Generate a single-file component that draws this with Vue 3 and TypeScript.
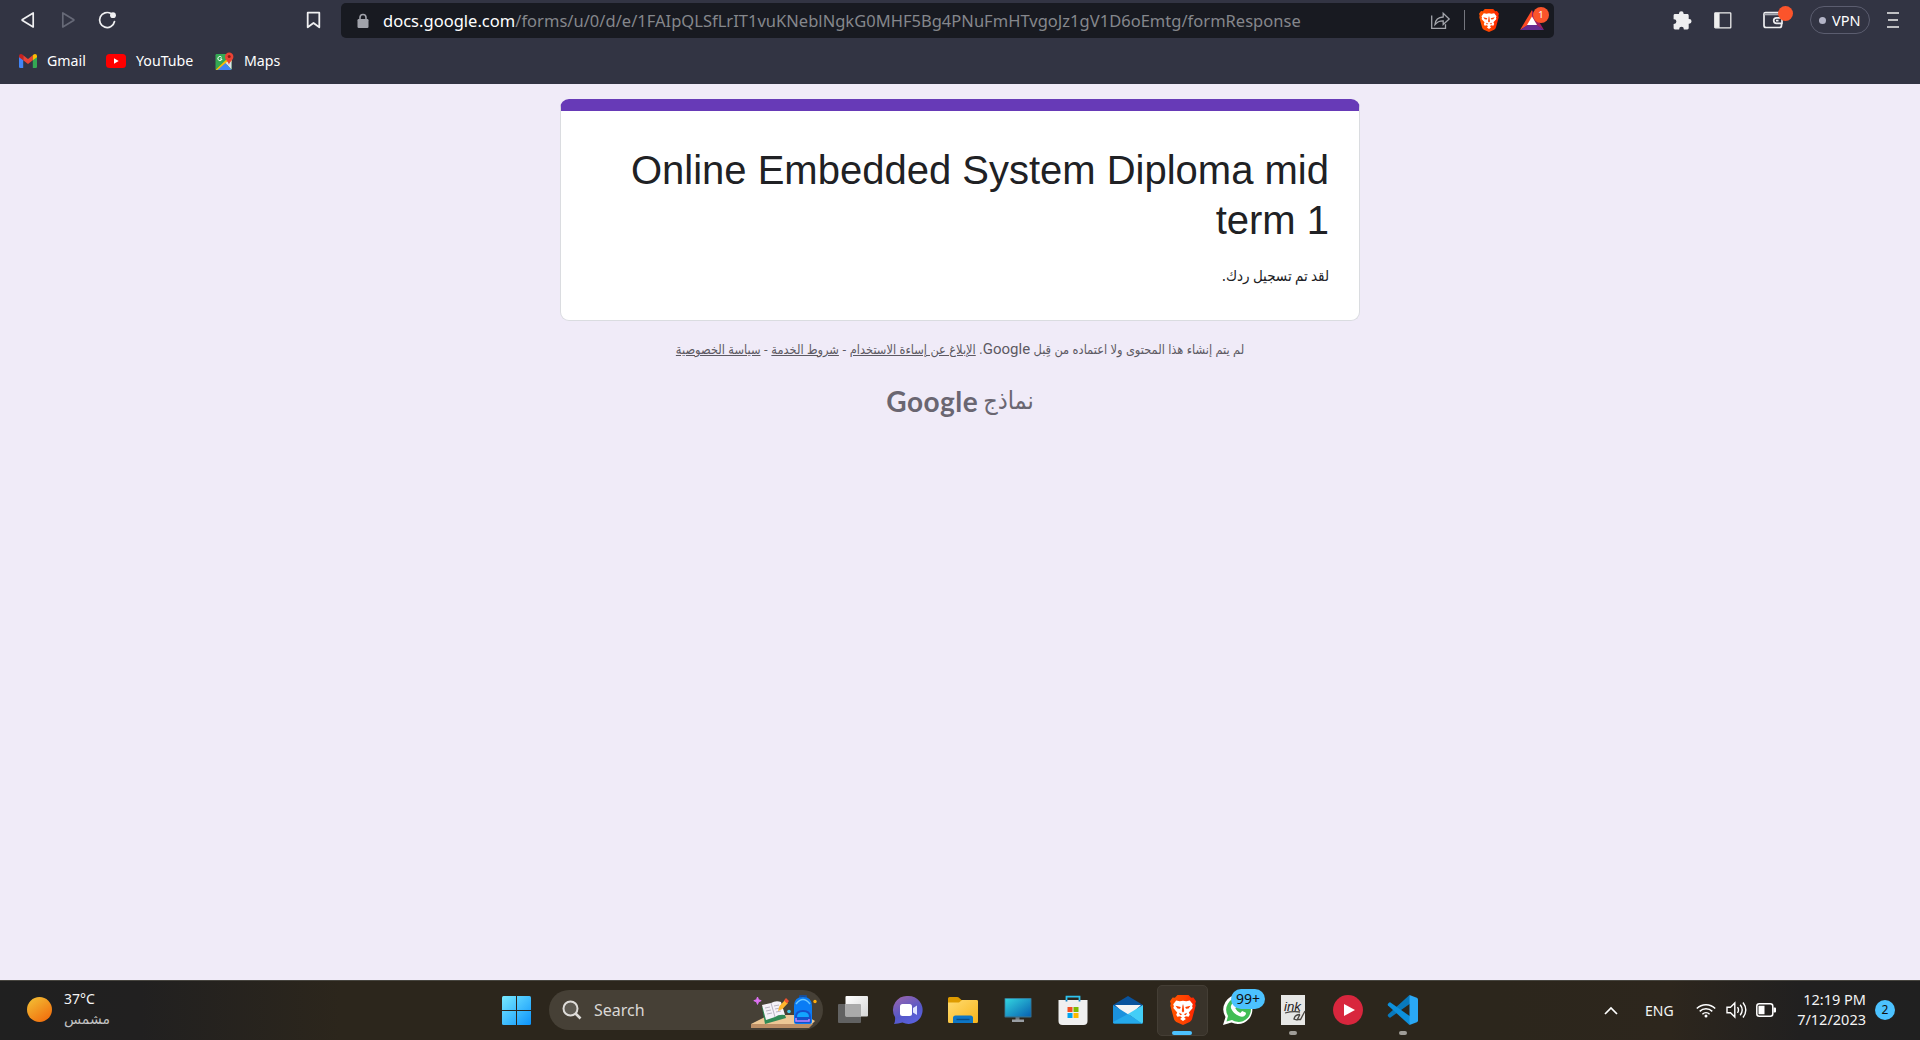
<script setup lang="ts">
interface Bookmark {
  id: string
  label: string
}

interface PinnedApp {
  id: string
  active?: boolean
  running?: boolean
  badge?: string
}

const bookmarks: Bookmark[] = [
  { id: 'gmail', label: 'Gmail' },
  { id: 'youtube', label: 'YouTube' },
  { id: 'maps', label: 'Maps' },
]

const apps: PinnedApp[] = [
  { id: 'taskview' },
  { id: 'chat' },
  { id: 'explorer' },
  { id: 'monitor' },
  { id: 'store' },
  { id: 'mail' },
  { id: 'brave', active: true },
  { id: 'whatsapp', badge: '99+' },
  { id: 'ink', running: true },
  { id: 'player' },
  { id: 'vscode', running: true },
]
</script>

<template>
  <div class="screen">
    <svg class="defs" width="0" height="0" aria-hidden="true">
      <defs>
        <linearGradient id="braveRed" x1="0" x2="1"><stop offset="0" stop-color="#ff5500" /><stop offset=".6" stop-color="#ff4000" /><stop offset="1" stop-color="#ff1f00" /></linearGradient>
        <symbol id="lion" viewBox="0 0 26 30">
          <path fill="url(#braveRed)" d="M7.500 0h11l2.600 2.800 2.300-.3L26 6.200l-.8 2.600.5 1.800-3.600 13.200c-.4 1.400-1.200 2.400-2.400 3.200L13 30l-6.700-3c-1.200-.8-2-1.800-2.400-3.200L.3 10.600l.5-1.800L0 6.200l2.600-3.700 2.300.3z" />
          <path fill="#fff" d="M13 5.700l3.200.6 3.600-.7 3 3.700-.7 2 .6 1.600-3.900 4.500 1 2.300-1.200 2-2.700-.5-1.800 1.300 1.800 1.400L13 26l-2.900-2.100 1.800-1.400-1.800-1.300-2.700.5-1.200-2 1-2.300-3.900-4.500.6-1.600-.7-2 3-3.700 3.600.7z" />
          <path fill="#ff4000" d="M5.500 10.800l5.300 1.300-.8 1.700-2.500-.3zM20.500 10.800l-5.300 1.300.8 1.700 2.500-.3zM12.400 11l.6-2 .6 2 .6 5.200L13 17.600l-1.200-1.400zM9 17.800l3.300 1.400-2.200 1zM17 17.800l-3.300 1.400 2.200 1z" />
        </symbol>
      </defs>
    </svg>

    <header class="browser">
      <div class="toolbar">
        <svg class="nav back" width="14" height="18" viewBox="0 0 14 18"><path d="M12.200 2v14L1.500 9.600q-.7-.6 0-1.200z" /></svg>
        <svg class="nav forward" width="14" height="18" viewBox="0 0 14 18"><path d="M1.800 2v14l10.700-6.400q.7-.6 0-1.200z" /></svg>
        <svg class="nav reload" width="19" height="18" viewBox="0 0 19 18"><path d="M13 2.600A7.500 7.500 0 1 0 16.500 10.500" /><circle cx="15" cy="4.200" r="2.900" /></svg>
        <svg class="nav bookmark" width="15" height="18" viewBox="0 0 15 18"><path d="M1.700 1.700h11.600v14.600L7.500 12l-5.800 4.300z" /></svg>

        <div class="address">
          <svg class="lock" width="12" height="16" viewBox="0 0 12 16"><path d="M3 7V4.500a3 3 0 0 1 6 0V7" fill="none" stroke="#a1a3ab" stroke-width="1.600" /><rect x=".5" y="6" width="11" height="9" rx="1.200" fill="#a1a3ab" /></svg>
          <div class="url"><span class="host">docs.google.com</span><span class="path">/forms/u/0/d/e/1FAIpQLSfLrIT1vuKNeblNgkG0MHF5Bg4PNuFmHTvgoJz1gV1D6oEmtg/formResponse</span></div>
          <svg class="share" width="21" height="19" viewBox="0 0 21 19" fill="none" stroke="#a3a5ab" stroke-width="1.300"><path d="M1.700 4.500v12.800h13.800v-4" /><path d="M5 13.500c.4-4.600 3.200-7.300 8.200-7.500V2.300l6 5.700-6 5.500V9.900c-3.500-.1-6 1-8.200 3.600z" /></svg>
          <i class="divider"></i>
          <svg class="shield" width="20" height="23"><use href="#lion" width="20" height="23" /></svg>
          <div class="rewards">
            <svg width="24" height="20" viewBox="0 0 24 20"><path d="M12 0L0 20l12-7z" fill="#ff4b24" /><path d="M12 0l12 20-12-7z" fill="#9e1f63" /><path d="M0 20h24l-12-8z" fill="#662d91" /><path d="M12 6.500l5 8.500H7z" fill="#fff" /></svg>
            <span>1</span>
          </div>
        </div>

        <svg class="puzzle" width="20" height="20" viewBox="0 0 20 20"><path fill="#eeeef0" d="M7 3.600a2.300 2.300 0 0 1 4.600 0V4h3.700c.8 0 1.400.6 1.400 1.400V9h.5a2.300 2.300 0 0 1 0 4.700h-.5V18c0 .8-.6 1.400-1.400 1.400h-3.500V19a2.300 2.300 0 0 0-4.600 0v.4H3c-.8 0-1.400-.6-1.400-1.400v-4H2a2.400 2.400 0 0 0 0-4.800h-.4V5.400C1.600 4.600 2.200 4 3 4h4z" /></svg>
        <svg class="sidebar" width="18" height="17" viewBox="0 0 18 17"><rect x=".8" y=".8" width="16" height="15" rx=".6" fill="none" stroke="#eee" stroke-width="1.300" /><path d="M.8.8h4.800v15H.8z" fill="#eee" /></svg>
        <div class="wallet">
          <svg width="21" height="18" viewBox="0 0 21 18" fill="none" stroke="#eeeef0" stroke-width="1.700"><path d="M18.500 5V3q0-1.500-1.500-1.500H2.500Q1 1.500 1 3v11.500Q1 16.500 3 16.500h13.500q2 0 2-2V13" /><path d="M1.500 3.300h17" stroke="#a9abb3" stroke-width="2" /><path d="M19 6.800h-5.500a2.800 2.800 0 0 0 0 5.600H19V7" /><path d="M13 9.600h2.500" /></svg>
          <i></i>
        </div>
        <div class="vpn"><i></i><span>VPN</span></div>
        <svg class="menu" width="12" height="18" viewBox="0 0 12 18"><path d="M0 2h12M1 9h10M0 16h12" stroke="#eee" stroke-width="1.600" /></svg>
      </div>

      <nav class="bookmarks">
        <div v-for="b in bookmarks" :key="b.id" class="bm" :class="b.id">
          <svg v-if="b.id === 'gmail'" width="18" height="14" viewBox="0 0 18 14"><path fill="#4285f4" d="M0 2.500l4.200 3V14H1.300Q0 14 0 12.700z" /><path fill="#34a853" d="M18 2.500l-4.200 3V14h2.900Q18 14 18 12.700z" /><path fill="#ea4335" d="M4.200 1.300L9 5l4.800-3.700v5L9 10 4.200 6.300z" /><path fill="#c5221f" d="M0 2Q0 0 2 0q.8 0 1.400.6l.8.700v5L0 3.200z" /><path fill="#fbbc04" d="M18 2q0-2-2-2-.8 0-1.400.6l-.8.700v5L18 3.200z" /></svg>
          <svg v-else-if="b.id === 'youtube'" width="20" height="14" viewBox="0 0 20 14"><rect width="20" height="14" rx="3.500" fill="#f00" /><path d="M8 4.200v5.600L12.700 7z" fill="#fff" /></svg>
          <svg v-else width="19" height="19" viewBox="0 0 19 19"><rect x=".5" y="2" width="16" height="16" rx="1.200" fill="#34a853" /><path d="M.5 18L14 5l2.500 2v3L2.500 18z" fill="#fbbc04" /><path d="M10.500 11l6-4v10.500z" fill="#dfe3e8" /><path d="M2.500 18l8-7 6 7z" fill="#4285f4" /><path d="M6.700 5.400a2.100 2.100 0 1 0 .3 1.600H5" fill="none" stroke="#fff" stroke-width="1" /><path d="M14 13c-.5-3.700-4-4.800-4-8.300a4.200 4.200 0 0 1 8.400 0C18.400 8.200 14.500 9.300 14 13z" fill="#ea4335" /><circle cx="14.200" cy="4.500" r="1.500" fill="#8e1b16" /></svg>
          <span>{{ b.label }}</span>
        </div>
      </nav>
    </header>

    <main class="form" dir="rtl">
      <section class="card">
        <h1>Online Embedded System Diploma mid term 1</h1>
        <p>لقد تم تسجيل ردك.</p>
      </section>
      <p class="disclaimer">لم يتم إنشاء هذا المحتوى ولا اعتماده من قِبل <b>Google</b>. <u>الإبلاغ عن إساءة الاستخدام</u> - <u>شروط الخدمة</u> - <u>سياسة الخصوصية</u></p>
      <div class="brand" dir="ltr"><span class="google">Google</span><span class="forms" dir="rtl">نماذج</span></div>
    </main>

    <footer class="taskbar">
      <div class="weather">
        <i class="sun"></i>
        <div><span class="temp">37°C</span><span class="sky" dir="rtl">مشمس</span></div>
      </div>

      <svg class="start" width="29" height="29" viewBox="0 0 29 29">
        <defs><linearGradient id="win" x1="0" y1="0" x2="1" y2="1"><stop offset="0" stop-color="#78eaff" /><stop offset="1" stop-color="#0c93fb" /></linearGradient><mask id="winMask"><path fill="#fff" d="M0 0h14v14H0zM15 0h14v14H15zM0 15h14v14H0zM15 15h14v14H15z" /></mask></defs>
        <rect width="29" height="29" rx="1.500" fill="url(#win)" mask="url(#winMask)" />
      </svg>

      <div class="search">
        <svg class="glass" width="20" height="20" viewBox="0 0 20 20" fill="none" stroke="#dedcd9" stroke-width="2"><circle cx="8.500" cy="8.500" r="7" fill="#5e5a52" /><path d="M13.500 13.500l5 5" stroke-width="2.600" /></svg>
        <span>Search</span>
        <svg class="scene" width="67" height="34" viewBox="0 0 67 34">
          <path d="M18 19h36l10 6-5 5H0v-2z" fill="#edc795" /><path d="M0 28h62l-4 4H0z" fill="#bd8f66" />
          <path d="M6.500 1l1 2.700 2.700 1-2.700 1-1 2.700-1-2.700-2.700-1 2.700-1z" fill="#df72f4" stroke="#df72f4" />
          <path d="M11 11l19-4 5 15-21 6z" fill="#308a56" /><path d="M11 9l9-2 4 14-9 3zM20 7q5-3 10-1l4 13q-6-1-10 2z" fill="#f5f1f8" /><path d="M20 7l4 14M14 12l5-1M15 15l5-1M16 18l5-1M23 10l5-1M24 13l5-1M25 16l5-1" stroke="#a9a3b5" stroke-width=".8" />
          <path d="M27 15l1.500-5 5.500-6 3 3-5.500 6z" fill="#ffb52d" /><path d="M33 4.500l2-2.500 3 3-2 2.500z" fill="#f2532f" />
          <circle cx="38" cy="15.500" r="1.800" fill="#43c9e9" /><circle cx="64" cy="5.500" r="1.700" fill="#ffad0b" />
          <path d="M49 3V0h6v3" fill="none" stroke="#0b53b8" stroke-width="1.500" /><path d="M43 26V10q0-9 9-9t9 9v16q0 2-2 2H45q-2 0-2-2z" fill="#0a7cf5" /><path d="M45 8q7-9 14 0" fill="none" stroke="#69c6ff" stroke-width="1.500" /><path d="M44 21q0-7 8-7t8 7v6H44z" fill="#1650ca" /><path d="M46 21q0-5 6-5t6 5z" fill="#12a5ff" /><path d="M45 22v3h13v-2" fill="none" stroke="#c183ff" stroke-width="1.500" />
        </svg>
      </div>

      <div class="apps">
        <div v-for="a in apps" :key="a.id" class="app" :class="{ active: a.active }">
          <svg v-if="a.id === 'taskview'" width="30" height="30" viewBox="0 0 30 30"><defs><linearGradient id="tv" x2="1" y2="1"><stop offset="0" stop-color="#fff" /><stop offset="1" stop-color="#d5d5d5" /></linearGradient></defs><rect x="0" y="9" width="23" height="19" rx="1" fill="#626262" /><rect x="7.500" y="1" width="22.500" height="20.500" rx="1" fill="url(#tv)" /><path d="M7.500 9H22q1 0 1 1v11.500H7.500z" fill="#aaa" /></svg>
          <svg v-else-if="a.id === 'chat'" width="30" height="30" viewBox="0 0 30 30"><defs><linearGradient id="ch" x1=".2" x2=".7" y2="1"><stop offset="0" stop-color="#9765ae" /><stop offset=".6" stop-color="#5557c8" /><stop offset="1" stop-color="#5a62df" /></linearGradient></defs><path d="M15.500 1a14 14 0 1 1-6 26.600Q5 29 1 29q1.500-3 1-7A14 14 0 0 1 15.500 1z" fill="url(#ch)" /><rect x="7" y="9" width="12" height="12" rx="2.500" fill="#fff" /><path d="M20 13l4-2.500v9.500l-4-2.500z" fill="#dfe4ff" /></svg>
          <svg v-else-if="a.id === 'explorer'" width="30" height="30" viewBox="0 0 30 30"><defs><linearGradient id="ex" x2="1" y2="1"><stop offset="0" stop-color="#ffdb70" /><stop offset="1" stop-color="#f8b51b" /></linearGradient></defs><path d="M0 9V3.500Q0 2 1.500 2H9q1.500 0 2.500 1.200L13.500 5h15Q30 5 30 6.500V10z" fill="#de9b00" /><path d="M0 7.500h11l3-2.500h14.500Q30 5 30 6.500v20q0 1.500-1.500 1.500h-27Q0 28 0 26.500z" fill="url(#ex)" /><path d="M5 28v-5q0-2.500 2.500-2.500h15Q25 20.500 25 23v5z" fill="#0d76c6" /><path d="M8.500 24.500h13" stroke="#074c86" stroke-width="1.400" /></svg>
          <svg v-else-if="a.id === 'monitor'" width="30" height="30" viewBox="0 0 30 30"><defs><linearGradient id="mo" x2="1" y2="1"><stop offset="0" stop-color="#32d4df" /><stop offset="1" stop-color="#0862b2" /></linearGradient></defs><path d="M12.500 22h4v3h-4z" fill="#70767c" /><path d="M9 24.500h12V27H9z" fill="#9a9ea3" /><rect x="1.500" y="3" width="27" height="19.500" rx=".8" fill="#37718e" /><rect x="2.300" y="3.800" width="25.400" height="17.500" fill="url(#mo)" /></svg>
          <svg v-else-if="a.id === 'store'" width="30" height="30" viewBox="0 0 30 30"><path d="M8.500 7V1.700h13V7" fill="none" stroke="#2ec3ee" stroke-width="1.800" /><path d="M.5 5h29v21q0 4-4 4h-21q-4 0-4-4z" fill="#f0f0f0" /><path d="M9.500 12h5v5h-5z" fill="#f25022" /><path d="M15.500 12h5v5h-5z" fill="#7fba00" /><path d="M9.500 18h5v5h-5z" fill="#00a4ef" /><path d="M15.500 18h5v5h-5z" fill="#ffb900" /><path d="M8.500 5v1.500M21.500 5v1.500" stroke="#1681bd" stroke-width="1.800" /></svg>
          <svg v-else-if="a.id === 'mail'" width="30" height="30" viewBox="0 0 30 30"><path d="M0 10L15 1l15 9-4 8H4z" fill="#09539d" /><path d="M2 10h26L15 22z" fill="#f4f4f4" /><path d="M0 10l30 18.500H1.500Q0 28.500 0 27z" fill="#1b91dd" /><path d="M30 10v17q0 1.500-1.500 1.500L15 19z" fill="#43cef7" /><path d="M0 27l15-8 14 9.500H1.500Q0 28.500 0 27z" fill="#25a9eb" /></svg>
          <svg v-else-if="a.id === 'brave'" width="26" height="30"><use href="#lion" width="26" height="30" /></svg>
          <svg v-else-if="a.id === 'whatsapp'" width="30" height="30" viewBox="0 0 30 30"><path d="M15.500 0a14.500 14.500 0 1 1-7 27.500L0 30l2.500-8A14.500 14.500 0 0 1 15.500 0z" fill="#fff" /><path d="M15.500 2.500a12.200 12.200 0 1 1-6.500 22.400l-5.500 1.600L5 21A12.200 12.200 0 0 1 15.500 2.500z" fill="#41bd55" /><path d="M10 8q1.500-1.500 2.500.2l1.300 3-1.500 2q1.700 3.500 5 4.700l1.800-2 3.500 1.600q.8.600 0 2.300-2 3-6.500 1.300-5.500-2-8-7.600Q7 10.500 10 8z" fill="#fff" /></svg>
          <svg v-else-if="a.id === 'ink'" width="24" height="30" viewBox="0 0 24 30"><path d="M0 0h24v30H0z" fill="#e7e7e5" /><text x="3" y="15.500" font-size="13" font-style="italic" font-family="'Liberation Sans', sans-serif" fill="#24221f" textLength="17" lengthAdjust="spacingAndGlyphs">ink</text><path d="M4 18q7-2 15-1M19 19.500l-3 5.500-3-1q1-4.500 6-4.500M24 16l-4.500 8.500H16" fill="none" stroke="#4a4641" stroke-width="1.300" /></svg>
          <svg v-else-if="a.id === 'player'" width="30" height="30" viewBox="0 0 30 30"><circle cx="15" cy="15" r="15" fill="#d8263d" /><path d="M11 9v12l11-6z" fill="#fff" /></svg>
          <svg v-else width="30" height="30" viewBox="0 0 30 30"><path d="M0 19.500L21.500 0 23 8 2.500 22.500Q1.700 23 1 22.300l-1-1q-.6-.9 0-1.800z" fill="#0879bd" /><path d="M0 10.500L21.500 30l1.500-8L2.500 7.500Q1.700 7 1 7.700l-1 1q-.6.900 0 1.800z" fill="#0d90dc" /><path d="M21.500 0l7.300 2.800Q30 3.300 30 4.500v21q0 1.200-1.200 1.700L21.500 30z" fill="#2aa8f5" /></svg>
          <span v-if="a.badge" class="count">{{ a.badge }}</span>
          <i v-if="a.active || a.running" class="indicator"></i>
        </div>
      </div>

      <div class="tray">
        <svg class="chev" width="14" height="9" viewBox="0 0 14 9"><path d="M1 8l6-6 6 6" fill="none" stroke="#fff" stroke-width="1.700" /></svg>
        <span class="lang">ENG</span>
        <svg class="wifi" width="20" height="16" viewBox="0 0 20 16" fill="none" stroke="#fff" stroke-width="1.500"><path d="M.8 6.500a13 13 0 0 1 18.400 0M3.700 9.400a9 9 0 0 1 12.600 0M6.400 12.200a5.200 5.200 0 0 1 7.200 0" /><circle cx="10" cy="14" r="1.500" fill="#fff" stroke="none" /></svg>
        <svg class="sound" width="21" height="18" viewBox="0 0 21 18" fill="none" stroke="#fff" stroke-width="1.400"><path d="M1 6.300h3.500L8.800 2v14l-4.300-4.300H1zM11.500 6.200q2 2.800 0 5.600M14.200 3.800q4 5.200 0 10.400M17 1.500q5.600 7.500 0 15" /></svg>
        <svg class="battery" width="20" height="14" viewBox="0 0 20 14"><rect x=".8" y=".8" width="16" height="12.400" rx="2.500" fill="none" stroke="#fff" stroke-width="1.500" /><path d="M2.500 2.800h6v8.400h-6zM17.500 4.500H19q1 0 1 1v3q0 1-1 1h-1.500z" fill="#fff" /></svg>
        <div class="clock"><span>12:19 PM</span><span>7/12/2023</span></div>
        <span class="notices">2</span>
      </div>
    </footer>
  </div>
</template>

<style>
body { margin: 0; background: #f0ebf8; }
</style>

<style scoped>
.screen { width: 1920px; height: 1040px; display: flex; flex-direction: column; overflow: hidden; background: #f0ebf8; font-family: "Noto Sans", "DejaVu Sans", sans-serif; }
.defs { position: absolute; }
svg { display: block; flex: none; overflow: visible; }

.browser { height: 84px; flex: none; background: #323443; color: #fff; }
.toolbar { height: 40px; display: flex; align-items: center; }
.nav { fill: none; stroke: #f0f0f2; stroke-width: 1.700; stroke-linejoin: round; stroke-linecap: round; }
.back { margin-left: 21px; }
.forward { margin-left: 26px; stroke: #666977; }
.reload { margin-left: 23px; }
.reload circle { fill: #f0f0f2; stroke: none; }
.bookmark { margin-left: 189px; stroke-width: 1.800; }
.address { width: 1213px; height: 35px; margin-left: 20px; border-radius: 5px; background: #181a21; display: flex; align-items: center; box-sizing: border-box; padding-left: 16px; }
.lock { margin-top: 1px; }
.url { width: 1047px; margin-left: 14px; padding-top: 1px; font-size: 16.500px; line-height: 34px; white-space: nowrap; letter-spacing: 0.020px; }
.path { color: #85878c; }
.share { width: 21px; }
.divider { width: 1px; height: 20px; margin-left: 13px; background: #74767e; }
.shield { margin-left: 14px; }
.rewards { position: relative; margin-left: 21px; }
.rewards span { position: absolute; left: 13px; top: -3px; width: 16px; height: 16px; border-radius: 50%; background: #fb542b; font-size: 9.500px; line-height: 16px; text-align: center; }
.puzzle { margin-left: 118px; }
.sidebar { margin-left: 22px; }
.wallet { position: relative; margin-left: 31px; }
.wallet i { position: absolute; left: 15px; top: -5px; width: 15px; height: 15px; border-radius: 50%; background: #fb542b; }
.vpn { width: 60px; height: 28px; box-sizing: border-box; margin-left: 26px; border: 1px solid #5b5d6f; border-radius: 14px; display: flex; align-items: center; padding-left: 8px; font-size: 14.500px; }
.vpn i { width: 7px; height: 7px; border-radius: 50%; background: #b3b4c7; margin-right: 6px; }
.vpn span { margin-top: -1px; }
.menu { margin-left: 17px; }

.bookmarks { height: 42px; display: flex; align-items: center; padding-left: 19px; font-size: 14.200px; }
.bm { display: flex; align-items: center; }
.bm.gmail { width: 87px; }
.bm.youtube { width: 109px; }
.bm span { margin: -2px 0 0 11px; }
.bm.gmail span, .bm.youtube span, .bm.maps span { margin-left: 10px; }

.form { flex: 1; display: flex; flex-direction: column; align-items: center; padding-top: 15px; }
.card { width: 800px; height: 222px; box-sizing: border-box; background: #fff; border: 1px solid #dadce0; border-top: 12px solid #673ab7; border-radius: 9px; padding: 34px 30px 0; color: #202124; text-align: right; }
.card h1 { margin: 0; font: 400 40px/50px "Liberation Sans", sans-serif; }
.card p { margin: 19px 0 0; font: condensed 15px/24px "DejaVu Sans Condensed", "DejaVu Sans", sans-serif; word-spacing: -1px; }
.disclaimer { margin: 18px 0 0; color: #5c5962; font: condensed 12.700px/20px "DejaVu Sans Condensed", "DejaVu Sans", sans-serif; word-spacing: -0.250px; white-space: nowrap; }
.disclaimer b { font: 400 15px/20px "Roboto", sans-serif; }
.brand { display: flex; align-items: center; height: 36px; margin-top: 23px; color: #6a6671; }
.google { font: 700 28px/36px "Lato", sans-serif; letter-spacing: 0.500px; }
.forms { font: condensed 25px/36px "DejaVu Sans Condensed", "DejaVu Sans", sans-serif; margin-left: 5px; }

.taskbar { height: 60px; flex: none; box-sizing: border-box; border-top: 1px solid #47453f; padding-bottom: 1px; background: linear-gradient(90deg, #202020 0, #212020 140px, #2c261c 340px, #2c261c 1500px, #2d261d 1670px, #212020 1800px, #202020); color: #f4f4f4; display: flex; align-items: center; }
.weather { width: 502px; display: flex; align-items: center; }
.sun { width: 25px; height: 25px; margin: -2px 0 0 27px; border-radius: 50%; background: linear-gradient(145deg, #f3c437, #f16408); }
.weather div { display: flex; flex-direction: column; align-items: flex-start; margin: -2px 0 0 12px; font-size: 14px; line-height: 20px; }
.weather .sky { color: #c2c2c2; }
.search { width: 274px; height: 40px; margin-left: 18px; border-radius: 20px; background: #464036; display: flex; align-items: center; overflow: hidden; }
.glass { margin-left: 13px; }
.search span { width: 157px; margin-left: 12px; color: #dad8d5; font-size: 16px; }
.scene { margin-top: 5px; }
.apps { display: flex; margin-left: 2px; }
.app { position: relative; width: 49px; height: 49px; margin: 0 2px; border: 1px solid transparent; border-radius: 5px; display: flex; align-items: center; justify-content: center; }
.active { background: #39332a; border-color: #443e35; }
.indicator { position: absolute; left: 21px; bottom: 0; width: 8px; height: 4px; border-radius: 2px; background: #a09d98; }
.active .indicator { left: 14px; width: 20px; background: #4cc2ff; }
.count { position: absolute; left: 18px; top: 3px; width: 34px; height: 20px; border-radius: 10px; background: #4cc2ff; color: #111; font-size: 14px; line-height: 20px; text-align: center; }
.tray { display: flex; align-items: center; margin-left: 174px; font-size: 14px; }
.lang { width: 51px; margin-left: 27px; }
.sound { margin-left: 10px; }
.battery { margin-left: 9px; }
.clock { width: 90px; margin-top: -2px; text-align: right; display: flex; flex-direction: column; font-size: 14.500px; line-height: 20px; }
.notices { width: 20px; height: 20px; margin-left: 9px; border-radius: 50%; background: #4cc2ff; color: #111; font-size: 12px; line-height: 20px; text-align: center; }
</style>
